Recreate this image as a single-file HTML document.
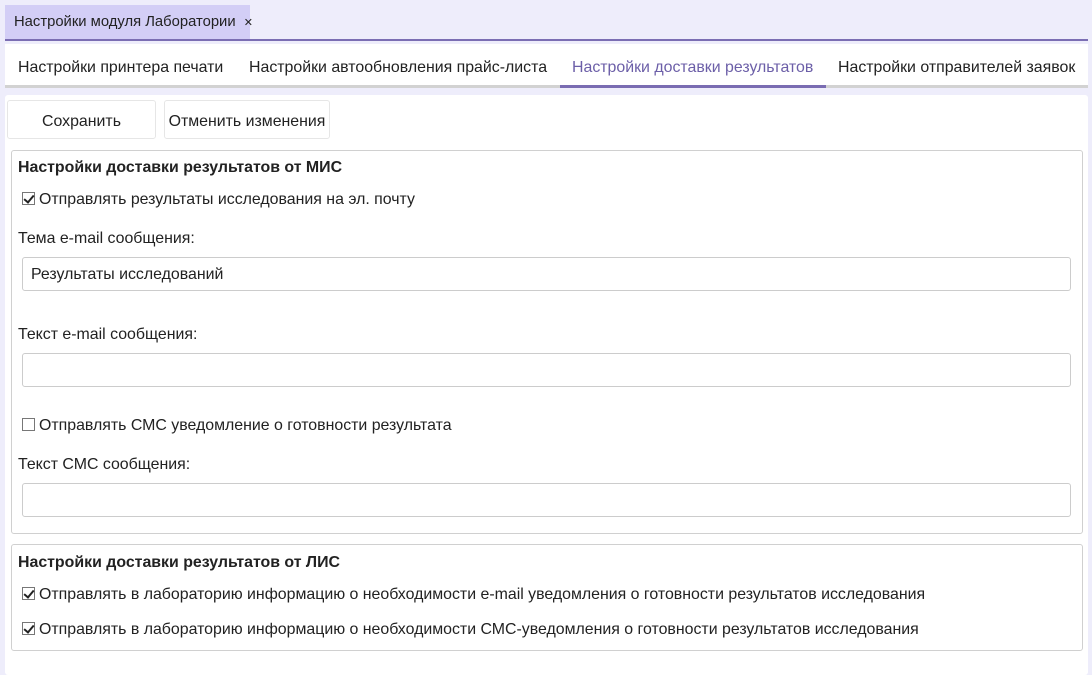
<!DOCTYPE html>
<html><head><meta charset="utf-8"><style>
*{box-sizing:border-box;margin:0;padding:0}
body{width:1092px;height:669px;background:#eeedfb;font-family:"Liberation Sans",sans-serif;font-size:15.9px;color:#222;position:relative;overflow:hidden}
.a{position:absolute;white-space:nowrap}
.cb{display:inline-block;width:13px;height:13px;border:1px solid #777;background:#fff;vertical-align:-1px;margin-right:4px;position:relative}
.cb.on::after{content:"";position:absolute;left:3px;top:0px;width:4px;height:8px;border:solid #222;border-width:0 2px 2px 0;transform:rotate(40deg)}
.inp{position:absolute;left:22px;width:1049px;height:34px;border:1px solid #ccc;border-radius:3px;background:#fff}
.grp{position:absolute;left:11px;width:1072px;border:1px solid #d0d0d0;border-radius:3px}
.btn{position:absolute;top:100px;height:39px;border:1px solid #e6e6e6;border-radius:3px;text-align:center;line-height:41px;background:#fff}
</style></head><body>
<div class="a" style="left:5px;top:5px;width:245px;height:35px;background:#d3cef6;line-height:35px;padding-left:9px;font-size:14.8px">Настройки модуля Лаборатории <span style="font-size:11px;margin-left:4px">✕</span></div>
<div class="a" style="left:5px;top:39px;width:1083px;height:2px;background:#7b6eb3"></div>
<div class="a" style="left:5px;top:44px;width:1083px;height:44px;background:#fff;border-bottom:3px solid #d2d2d2"></div>
<div class="a" style="left:560px;top:85px;width:266px;height:3px;background:#7a6cb2"></div>
<div class="a" style="left:18px;top:59px">Настройки принтера печати</div>
<div class="a" style="left:249px;top:59px">Настройки автообновления прайс-листа</div>
<div class="a" style="left:572px;top:59px;color:#6c5fa8">Настройки доставки результатов</div>
<div class="a" style="left:838px;top:59px">Настройки отправителей заявок</div>
<div class="a" style="left:5px;top:95px;width:1083px;height:580px;background:#fff;border-radius:3px"></div>
<div class="btn" style="left:7px;width:149px">Сохранить</div>
<div class="btn" style="left:164px;width:166px">Отменить изменения</div>
<div class="grp" style="top:150px;height:384px"></div>
<div class="a" style="left:18px;top:159px;font-weight:bold">Настройки доставки результатов от МИС</div>
<div class="a" style="left:22px;top:191px"><span class="cb on"></span>Отправлять результаты исследования на эл. почту</div>
<div class="a" style="left:18px;top:230px">Тема e-mail сообщения:</div>
<div class="inp" style="top:257px"></div>
<div class="a" style="left:31px;top:266px">Результаты исследований</div>
<div class="a" style="left:18px;top:326px">Текст e-mail сообщения:</div>
<div class="inp" style="top:353px"></div>
<div class="a" style="left:22px;top:417px"><span class="cb"></span>Отправлять СМС уведомление о готовности результата</div>
<div class="a" style="left:18px;top:456px">Текст СМС сообщения:</div>
<div class="inp" style="top:483px"></div>
<div class="grp" style="top:544px;height:107px"></div>
<div class="a" style="left:18px;top:554px;font-weight:bold">Настройки доставки результатов от ЛИС</div>
<div class="a" style="left:22px;top:586px"><span class="cb on"></span>Отправлять в лабораторию информацию о необходимости e-mail уведомления о готовности результатов исследования</div>
<div class="a" style="left:22px;top:621px"><span class="cb on"></span>Отправлять в лабораторию информацию о необходимости СМС-уведомления о готовности результатов исследования</div>
</body></html>
